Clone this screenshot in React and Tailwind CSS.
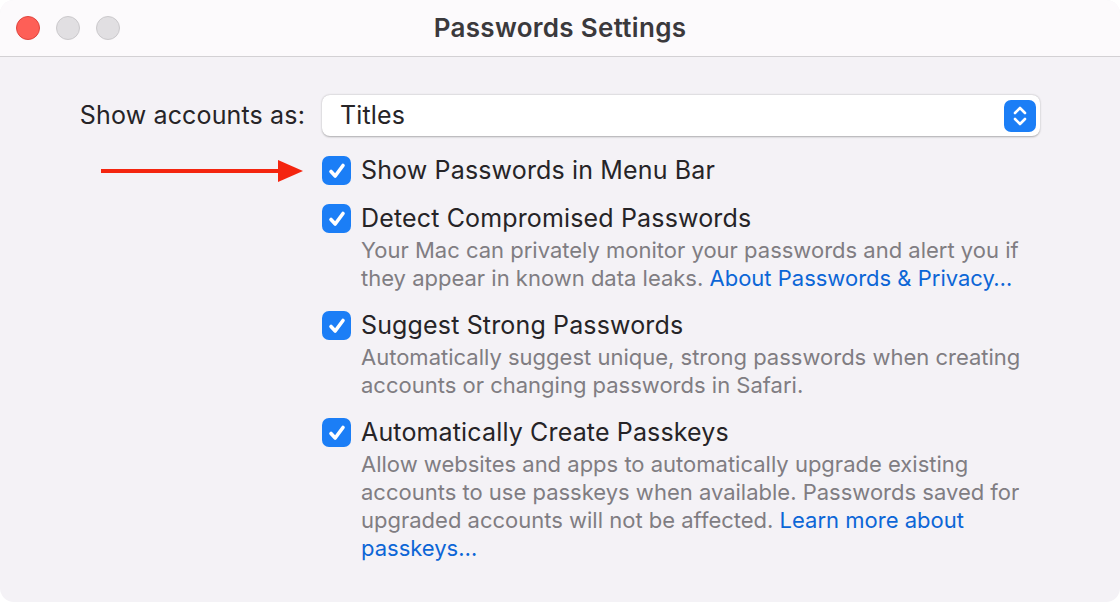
import React from 'react';

const FONT = { fontFamily: 'Inter, "Noto Sans", sans-serif' };

const CheckBox = () => (
    <div className="w-[29px] h-[29px] rounded-[7px] bg-[#1b7ef6] flex items-center justify-center shrink-0">
        <svg width="20" height="20" viewBox="0 0 20 20" fill="none">
            <path d="M4 10.5 L8.2 15 L16 4.5" stroke="white" strokeWidth="3.6" strokeLinecap="round" strokeLinejoin="round" />
        </svg>
    </div>
);

const Option = ({ label, children }) => (
    <div className="flex gap-[10px]">
        <CheckBox />
        <div>
            <div className="text-[25px] leading-[29px] tracking-[0.15px] text-[#262427]">{label}</div>
            {children && (
                <div className="text-[22px] leading-[28px] text-[#807d82] mt-[3px]">{children}</div>
            )}
        </div>
    </div>
);

const Link = ({ children }) => <span className="text-[#0c66d6]">{children}</span>;

const Arrow = () => (
    <svg width="202" height="24" viewBox="0 0 202 24">
        <line x1="0" y1="12" x2="180" y2="12" stroke="#f4250f" strokeWidth="4" />
        <polygon points="177,1 202,12 177,23" fill="#f4250f" />
    </svg>
);

export default function App() {
    return (
        <div className="w-[1120px] h-[602px] bg-white" style={FONT}>
            <div className="w-full h-full rounded-[14px] overflow-hidden bg-[#f4f2f6] flex flex-col">
                {/* Title bar */}
                <div className="h-[57px] bg-[#fcfafc] border-b border-[#d3d1d4] flex items-center relative shrink-0">
                    <div className="flex gap-[16px] pl-[16px]">
                        <div className="w-[24px] h-[24px] rounded-full bg-[#fe5f57] border border-[#e0443e]" />
                        <div className="w-[24px] h-[24px] rounded-full bg-[#e1dfe2] border border-[#cbc9cc]" />
                        <div className="w-[24px] h-[24px] rounded-full bg-[#e1dfe2] border border-[#cbc9cc]" />
                    </div>
                    <div className="absolute inset-x-0 top-0 h-[55px] flex items-center justify-center pointer-events-none">
                        <span className="text-[26px] font-semibold tracking-[0.3px] text-[#3b393c]">Passwords Settings</span>
                    </div>
                </div>

                {/* Body */}
                <div className="grid grid-cols-[305px_718px] gap-x-[17px] pt-[38px]">
                    <div className="flex items-center justify-end h-[41px] text-[25px] tracking-[0.15px] text-[#262427]">Show accounts as:</div>
                    <div className="h-[41px] bg-white rounded-[8px] shadow-[0_0.5px_2px_rgba(0,0,0,0.3)] flex items-center justify-between pl-[18px] pr-[4px]">
                        <span className="text-[25px] tracking-[0.15px] text-[#262427]">Titles</span>
                        <div className="w-[32px] h-[32px] rounded-[7px] bg-[#1b7ef6] flex items-center justify-center">
                            <svg width="18" height="24" viewBox="0 0 18 24" fill="none">
                                <path d="M4 9 L9 4 L14 9" stroke="white" strokeWidth="2.6" strokeLinecap="round" strokeLinejoin="round" />
                                <path d="M4 15 L9 20 L14 15" stroke="white" strokeWidth="2.6" strokeLinecap="round" strokeLinejoin="round" />
                            </svg>
                        </div>
                    </div>

                    {/* Options */}
                    <div className="flex justify-end items-start pt-[20px] pr-[2px]">
                        <div className="h-[29px] flex items-center"><Arrow /></div>
                    </div>
                    <div className="flex flex-col gap-[19px] pt-[20px]">
                        <Option label="Show Passwords in Menu Bar" />
                        <Option label="Detect Compromised Passwords">
                            Your Mac can privately monitor your passwords and alert you if they appear in known data leaks. <Link>About Passwords &amp; Privacy…</Link>
                        </Option>
                        <Option label="Suggest Strong Passwords">
                            Automatically suggest unique, strong passwords when creating accounts or changing passwords in Safari.
                        </Option>
                        <Option label="Automatically Create Passkeys">
                            Allow websites and apps to automatically upgrade existing accounts to use passkeys when available. Passwords saved for upgraded accounts will not be affected. <Link>Learn more about passkeys…</Link>
                        </Option>
                    </div>
                </div>
            </div>
        </div>
    );
}
